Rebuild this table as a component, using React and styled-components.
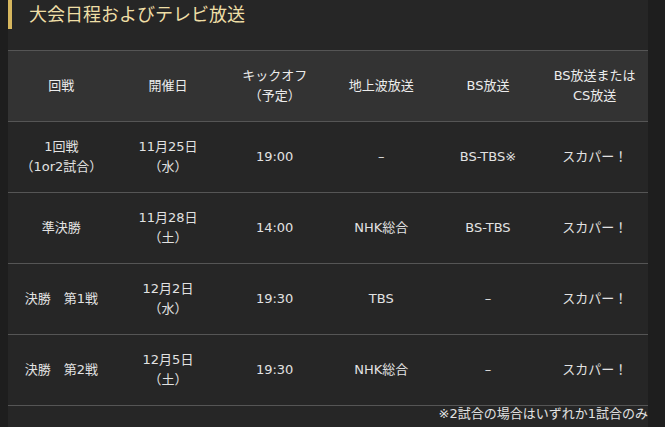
import React from "react";
import styled, { createGlobalStyle } from "styled-components";

const GlobalStyle = createGlobalStyle`
  body {
    margin: 0;
    background: #1e1e1e;
    font-family: "Noto Sans CJK JP", "Noto Sans", sans-serif;
  }
`;

const Page = styled.div`
  width: 640px;
  margin-left: 8px;
  min-height: 427px;
  background: #262626;
  color: #e2e2e2;
`;

const Title = styled.h2`
  margin: 0;
  height: 29px;
  border-left: 4px solid #d6b65e;
  padding-left: 17px;
  font-size: 18px;
  font-weight: normal;
  line-height: 27px;
  color: #efdfa6;
`;

// latin glyphs run wider in the original, DejaVu gets close
const Table = styled.table`
  width: 100%;
  margin-top: 21px;
  border-collapse: collapse;
  table-layout: fixed;
  font-family: "DejaVu Sans", "Noto Sans CJK JP", sans-serif;
  font-size: 13px;
  line-height: 20px;
`;

const Head = styled.th`
  height: 70px;
  padding: 0;
  background: #333333;
  border-top: 1px solid #555555;
  border-bottom: 1px solid #555555;
  font-weight: normal;
  color: #ececec;
  text-align: center;
  vertical-align: middle;
`;

const Cell = styled.td`
  height: 70px;
  padding: 0;
  border-bottom: 1px solid #555555;
  text-align: center;
  vertical-align: middle;
  color: #e2e2e2;
`;

const Note = styled.p`
  margin: 0;
  text-align: right;
  font-family: "DejaVu Sans", "Noto Sans CJK JP", sans-serif;
  font-size: 13px;
  line-height: 16px;
  color: #e2e2e2;
`;

const headers = [
  ["回戦"],
  ["開催日"],
  ["キックオフ", "（予定）"],
  ["地上波放送"],
  ["BS放送"],
  ["BS放送または", "CS放送"],
];

const rows = [
  [["1回戦", "（1or2試合）"], ["11月25日", "（水）"], ["19:00"], ["–"], ["BS-TBS※"], ["スカパー！"]],
  [["準決勝"], ["11月28日", "（土）"], ["14:00"], ["NHK総合"], ["BS-TBS"], ["スカパー！"]],
  [["決勝　第1戦"], ["12月2日", "（水）"], ["19:30"], ["TBS"], ["–"], ["スカパー！"]],
  [["決勝　第2戦"], ["12月5日", "（土）"], ["19:30"], ["NHK総合"], ["–"], ["スカパー！"]],
];

const Lines = ({ lines }) =>
  lines.map((l, i) => (
    <React.Fragment key={i}>
      {i > 0 && <br />}
      {l}
    </React.Fragment>
  ));

export default function App() {
  return (
    <Page>
      <GlobalStyle />
      <Title>大会日程およびテレビ放送</Title>
      <Table>
        <thead>
          <tr>
            {headers.map((h, i) => (
              <Head key={i}>
                <Lines lines={h} />
              </Head>
            ))}
          </tr>
        </thead>
        <tbody>
          {rows.map((row, r) => (
            <tr key={r}>
              {row.map((c, i) => (
                <Cell key={i}>
                  <Lines lines={c} />
                </Cell>
              ))}
            </tr>
          ))}
        </tbody>
      </Table>
      <Note>※2試合の場合はいずれか1試合のみ</Note>
    </Page>
  );
}
